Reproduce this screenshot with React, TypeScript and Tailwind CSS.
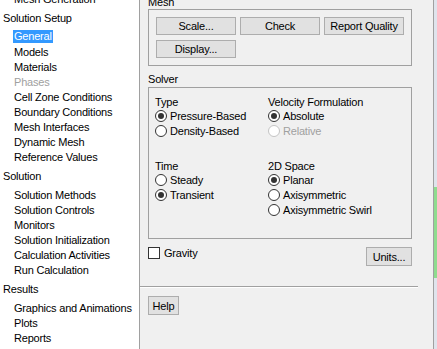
import React from "react";

const F = { fontFamily: "'Liberation Sans', Arial, sans-serif" };

function Radio({ on, disabled, label }: { on?: boolean; disabled?: boolean; label: string }) {
  return (
    <div className="flex h-[15px] items-center">
      <span
        className={
          "flex h-[12px] w-[12px] items-center justify-center rounded-full border bg-white " +
          (disabled ? "border-[#c4c4c4]" : "border-[#333333]")
        }
      >
        {on && <span className="h-[6px] w-[6px] rounded-full bg-[#333333]" />}
      </span>
      <span className={"ml-[3px] " + (disabled ? "text-[#a0a0a0]" : "text-black")}>{label}</span>
    </div>
  );
}

function Btn({ label, w }: { label: string; w: string }) {
  return (
    <div
      className={
        "flex h-[18px] items-center justify-center border border-[#adadad] bg-[#e1e1e1] text-black " + w
      }
    >
      {label}
    </div>
  );
}

const tree: { t: string; h?: boolean; sel?: boolean; dis?: boolean }[] = [
  { t: "Mesh Generation" },
  { t: "Solution Setup", h: true },
  { t: "General", sel: true },
  { t: "Models" },
  { t: "Materials" },
  { t: "Phases", dis: true },
  { t: "Cell Zone Conditions" },
  { t: "Boundary Conditions" },
  { t: "Mesh Interfaces" },
  { t: "Dynamic Mesh" },
  { t: "Reference Values" },
  { t: "Solution", h: true },
  { t: "Solution Methods" },
  { t: "Solution Controls" },
  { t: "Monitors" },
  { t: "Solution Initialization" },
  { t: "Calculation Activities" },
  { t: "Run Calculation" },
  { t: "Results", h: true },
  { t: "Graphics and Animations" },
  { t: "Plots" },
  { t: "Reports" },
];

export default function App() {
  return (
    <div
      className="flex h-[349px] w-[437px] overflow-hidden bg-[#f0f0f0] text-[11px] leading-[14px] tracking-[-0.2px] text-black"
      style={F}
    >
      {/* left tree */}
      <div className="h-full w-[140px] shrink-0 border-r border-[#a0a0a0] bg-white">
        <div className="-mt-[9px] flex flex-col">
          {tree.map((r, i) =>
            r.h ? (
              <div key={i} className="flex h-[23px] items-center pl-[3px] whitespace-nowrap">
                {r.t}
              </div>
            ) : (
              <div key={i} className="flex h-[15px] items-center pl-[13px] whitespace-nowrap">
                {r.sel ? (
                  <span className="bg-[#3399ff] px-[1px] leading-[13px] text-white">{r.t}</span>
                ) : (
                  <span className={"pl-[1px] " + (r.dis ? "text-[#a0a0a0]" : "")}>{r.t}</span>
                )}
              </div>
            )
          )}
        </div>
      </div>

      {/* main panel */}
      <div className="flex h-full flex-1 flex-col pl-[8px]">
        <div className="-mt-[5px] h-[14px]">Mesh</div>
        <div className="w-[264px] border border-[#a0a0a0] pt-[7px] pb-[7px] pl-[7px]">
          <div className="flex gap-[4px]">
            <Btn label="Scale..." w="w-[80px]" />
            <Btn label="Check" w="w-[80px]" />
            <Btn label="Report Quality" w="w-[80px]" />
          </div>
          <div className="mt-[5px] flex">
            <Btn label="Display..." w="w-[80px]" />
          </div>
        </div>

        <div className="mt-[6px] h-[14px]">Solver</div>
        <div className="mt-[1px] flex h-[152px] w-[264px] border border-[#a0a0a0] pt-[8px] pl-[6px]">
          <div className="flex w-[113px] flex-col">
            <div className="h-[12px] leading-[12px]">Type</div>
            <Radio on label="Pressure-Based" />
            <Radio label="Density-Based" />
            <div className="mt-[22px] h-[12px] leading-[12px]">Time</div>
            <Radio label="Steady" />
            <Radio on label="Transient" />
          </div>
          <div className="flex flex-col">
            <div className="h-[12px] leading-[12px]">Velocity Formulation</div>
            <Radio on label="Absolute" />
            <Radio disabled label="Relative" />
            <div className="mt-[22px] h-[12px] leading-[12px]">2D Space</div>
            <Radio on label="Planar" />
            <Radio label="Axisymmetric" />
            <Radio label="Axisymmetric Swirl" />
          </div>
        </div>

        <div className="mt-[7px] flex w-[264px] items-start justify-between">
          <div className="flex items-center">
            <span className="h-[12px] w-[12px] border border-[#333333] bg-white" />
            <span className="ml-[4px]">Gravity</span>
          </div>
          <div className="mt-[1px] flex h-[19px] w-[46px] items-center justify-center border border-[#adadad] bg-[#e1e1e1]">
            Units...
          </div>
        </div>

        <div className="-ml-[8px] mt-[20px] w-[278px] border-t border-b border-t-[#a0a0a0] border-b-white" />

        <div className="mt-[8px] flex h-[19px] w-[31px] items-center justify-center border border-[#adadad] bg-[#e1e1e1]">
          Help
        </div>
      </div>

      {/* right edge */}
      <div className="flex h-full w-[4px] shrink-0 flex-col border-l border-[#a0a0a0] bg-[#dfe4ec]">
        <div className="h-[187px]" />
        <div className="h-[91px] bg-[#8fdc8f]" />
      </div>
    </div>
  );
}
